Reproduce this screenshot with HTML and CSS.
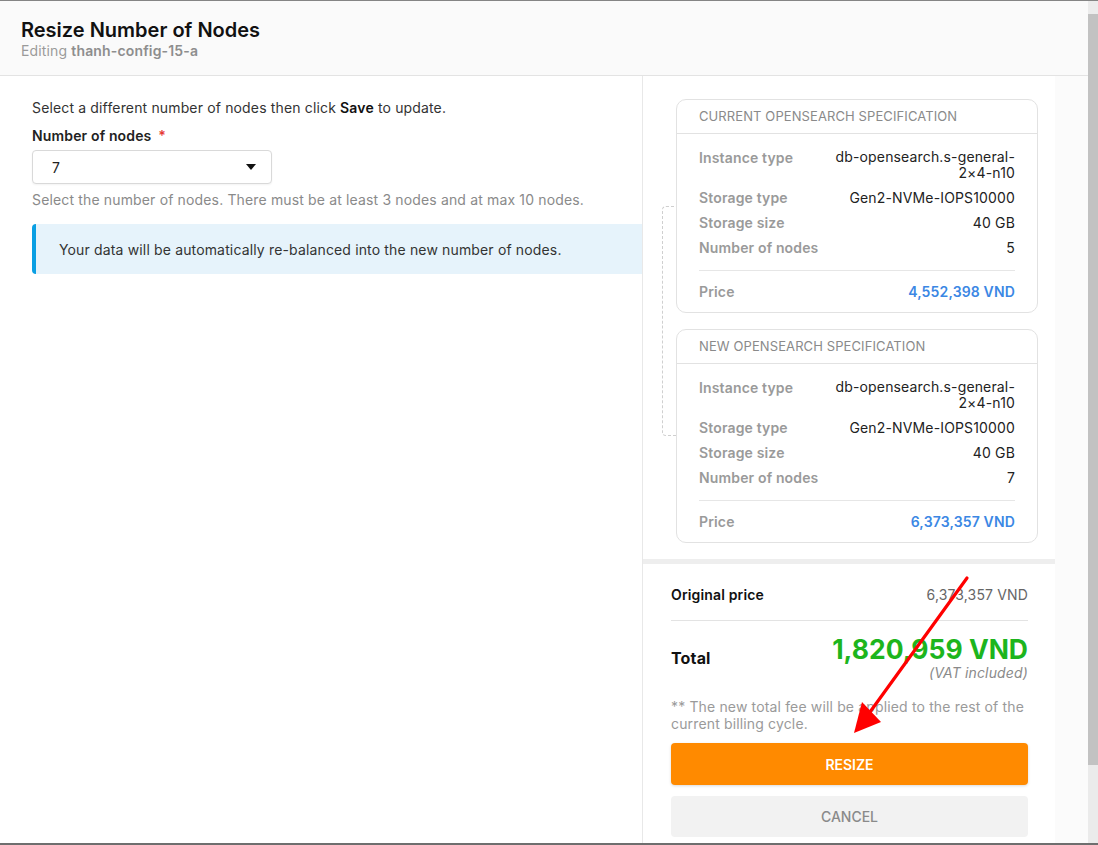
FILE: index.html
```html
<!DOCTYPE html>
<html lang="en">
<head>
<meta charset="utf-8">
<title>Resize Number of Nodes</title>
<link rel="stylesheet" href="styles.css">
</head>
<body>
<div class="frame">
  <div class="main">
    <header class="header">
      <h1 class="title">Resize Number of Nodes</h1>
      <div class="subtitle">Editing <b>thanh-config-15-a</b></div>
    </header>
    <div class="content">
      <section class="left">
        <p class="intro">Select a different number of nodes then click <b>Save</b> to update.</p>
        <label class="field-label">Number of nodes <span class="req">*</span></label>
        <div class="select">
          <span>7</span>
          <svg class="caret" width="10" height="6" viewBox="0 0 10 6"><path d="M0 0H10L5 6Z" fill="#111"/></svg>
        </div>
        <p class="helper">Select the number of nodes. There must be at least 3 nodes and at max 10 nodes.</p>
        <div class="info">Your data will be automatically re-balanced into the new number of nodes.</div>
      </section>
      <aside class="right">
        <div class="cards">
          <div class="connector"></div>
          <div class="card">
            <div class="card-head">CURRENT OPENSEARCH SPECIFICATION</div>
            <div class="card-body">
              <div class="row"><span class="k">Instance type</span><span class="v two">db-opensearch.s-general-<br>2×4-n10</span></div>
              <div class="row"><span class="k">Storage type</span><span class="v">Gen2-NVMe-IOPS10000</span></div>
              <div class="row"><span class="k">Storage size</span><span class="v">40 GB</span></div>
              <div class="row"><span class="k">Number of nodes</span><span class="v">5</span></div>
              <div class="divider"></div>
              <div class="row price"><span class="k">Price</span><span class="v">4,552,398 VND</span></div>
            </div>
          </div>
          <div class="card">
            <div class="card-head">NEW OPENSEARCH SPECIFICATION</div>
            <div class="card-body">
              <div class="row"><span class="k">Instance type</span><span class="v two">db-opensearch.s-general-<br>2×4-n10</span></div>
              <div class="row"><span class="k">Storage type</span><span class="v">Gen2-NVMe-IOPS10000</span></div>
              <div class="row"><span class="k">Storage size</span><span class="v">40 GB</span></div>
              <div class="row"><span class="k">Number of nodes</span><span class="v">7</span></div>
              <div class="divider"></div>
              <div class="row price"><span class="k">Price</span><span class="v">6,373,357 VND</span></div>
            </div>
          </div>
        </div>
        <div class="band"></div>
        <div class="summary">
          <div class="orig"><span class="ok">Original price</span><span class="ov">6,373,357 VND</span></div>
          <div class="sdiv"></div>
          <div class="total">
            <span class="tk">Total</span>
            <div class="tv">
              <div class="amount">1,820,959 VND</div>
              <div class="vat">(VAT included)</div>
            </div>
          </div>
          <p class="note">** The new total fee will be applied to the rest of the current billing cycle.</p>
          <button class="btn primary">RESIZE</button>
          <button class="btn secondary">CANCEL</button>
        </div>
      </aside>
      <div class="gutter"></div>
    </div>
  </div>
  <div class="scrollbar">
    <div class="sb-btn"></div>
    <div class="sb-thumb"></div>
    <div class="sb-track"></div>
  </div>
  <svg class="annot" width="1098" height="845" viewBox="0 0 1098 845">
    <line x1="967" y1="578" x2="870" y2="712" stroke="#ff0000" stroke-width="3.2" stroke-linecap="round"/>
    <path d="M854 733 L881 722 L862 702 Z" fill="#ff0000"/>
  </svg>
</div>
</body>
</html>
```
FILE: styles.css
```css
* { box-sizing: border-box; }
html, body { margin: 0; padding: 0; }
body {
  font-family: Inter, "Noto Sans", sans-serif;
  font-size: 14px;
  letter-spacing: 0.15px;
  color: #222;
  background: #fff;
}
.frame {
  position: relative;
  width: 1098px;
  height: 845px;
  display: flex;
  border-top: 1px solid #858585;
  border-bottom: 2px solid #6e6e6e;
  overflow: hidden;
}
.main {
  width: 1088px;
  display: flex;
  flex-direction: column;
}
.header {
  height: 75px;
  background: #fafafa;
  border-bottom: 1px solid #e3e3e3;
  padding: 17px 21px 0;
}
.title {
  margin: 0;
  font-size: 20px;
  font-weight: 600;
  line-height: 24px;
  letter-spacing: 0;
  color: #111;
}
.subtitle {
  font-size: 14px;
  line-height: 18px;
  color: #9a9a9a;
}
.subtitle b { font-weight: 600; color: #8e8e8e; }
.content {
  flex: 1;
  display: flex;
}
.left {
  width: 642px;
  padding: 22px 0 0 32px;
}
.intro {
  margin: 0;
  line-height: 20px;
  color: #333;
}
.intro b { font-weight: 600; color: #111; }
.field-label {
  display: block;
  margin-top: 8px;
  font-weight: 600;
  line-height: 20px;
  color: #222;
}
.req { color: #e53935; margin-left: 3px; }
.select {
  margin-top: 4px;
  width: 240px;
  height: 34px;
  border: 1px solid #d9d9d9;
  border-radius: 4px;
  display: flex;
  align-items: center;
  justify-content: space-between;
  padding: 0 15px 0 19px;
  background: #fff;
  box-shadow: 0 1px 2px rgba(0,0,0,0.05);
}
.helper {
  margin: 6px 0 0;
  line-height: 20px;
  color: #8a8a8a;
}
.info {
  margin-top: 14px;
  height: 50px;
  background: #e6f3fb;
  border-left: 4px solid #0a9fe3;
  border-radius: 4px 0 0 4px;
  padding: 0 0 0 23px;
  display: flex;
  align-items: center;
  color: #333;
}
.right {
  width: 413px;
  border-left: 1px solid #e8e8e8;
  display: flex;
  flex-direction: column;
}
.cards {
  position: relative;
  padding: 23px 17px 16px 33px;
  display: flex;
  flex-direction: column;
  gap: 16px;
}
.connector {
  position: absolute;
  left: 19px;
  top: 130px;
  width: 16px;
  height: 230px;
  border: 1px dashed #cfcfcf;
  border-right: none;
  border-radius: 4px 0 0 4px;
}
.card {
  position: relative;
  background: #fff;
  border: 1px solid #e2e2e2;
  border-radius: 10px;
}
.card-head {
  height: 34px;
  border-bottom: 1px solid #e2e2e2;
  padding: 0 22px 1px;
  display: flex;
  align-items: center;
  font-size: 13px;
  color: #8a8a8a;
  letter-spacing: 0.1px;
}
.card-body {
  padding: 15px 22px 12px;
}
.row {
  display: flex;
  justify-content: space-between;
  line-height: 17px;
  margin-bottom: 8px;
}
.row .k { font-weight: 600; color: #9a9a9a; }
.row .v { text-align: right; color: #222; }
.row .v.two { line-height: 16px; }
.divider {
  height: 1px;
  background: #e6e6e6;
  margin: 14px 0 12px;
}
.row.price { margin-bottom: 0; }
.row.price .v { color: #3b87e4; font-weight: 600; }
.band {
  height: 5px;
  background: #eeeeee;
}
.summary {
  padding: 21px 27px 0 28px;
}
.orig {
  display: flex;
  justify-content: space-between;
  line-height: 20px;
}
.ok { font-weight: 600; color: #111; }
.ov { color: #666; }
.sdiv {
  height: 1px;
  background: #e3e3e3;
  margin: 15px 0 12px;
}
.total {
  display: flex;
  justify-content: space-between;
  align-items: center;
}
.tk { font-size: 16px; font-weight: 700; color: #111; margin-top: 2px; }
.tv { text-align: right; }
.amount {
  font-size: 26.5px;
  font-weight: 700;
  line-height: 32px;
  letter-spacing: 0;
  color: #1db51d;
}
.vat {
  font-style: italic;
  color: #8a8a8a;
  line-height: 16px;
}
.note {
  margin: 17px 0 0;
  line-height: 17px;
  color: #9a9a9a;
}
.btn {
  display: block;
  width: 100%;
  border: none;
  border-radius: 4px;
  font-family: Inter, "Noto Sans", sans-serif;
  font-size: 14px;
  font-weight: 600;
  cursor: pointer;
}
.primary {
  margin-top: 11px;
  height: 42px;
  background: #ff8a00;
  color: #fff;
  box-shadow: 0 1px 3px rgba(0,0,0,0.15);
}
.secondary {
  margin-top: 11px;
  height: 41px;
  background: #f2f2f2;
  color: #8a8a8a;
  font-weight: 500;
}
.gutter {
  flex: 1;
  background: #fbfbfb;
}
.scrollbar {
  width: 10px;
  display: flex;
  flex-direction: column;
  background: #ebebeb;
}
.sb-btn { height: 13px; background: #ececec; }
.sb-thumb { height: 751px; background: #c2c2c2; }
.sb-track { flex: 1; }
.annot {
  position: absolute;
  left: 0;
  top: -1px;
  pointer-events: none;
}
```
